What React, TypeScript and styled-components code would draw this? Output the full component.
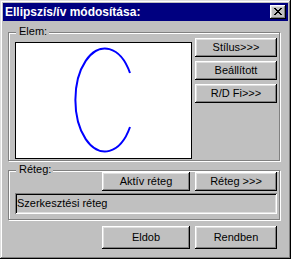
import React from "react";
import styled, { createGlobalStyle } from "styled-components";

const Global = createGlobalStyle`
  html, body { margin: 0; padding: 0; background: #c0c0c0; }
  body { font-family: "Liberation Sans", Arial, sans-serif; font-size: 11px; color: #000; }
  * { box-sizing: border-box; }
`;

const Window = styled.div`
  width: 291px;
  height: 259px;
  padding: 3px;
  background: #c0c0c0;
  box-shadow: inset -1px -1px 0 #000, inset 1px 1px 0 #dfdfdf,
    inset -2px -2px 0 #808080, inset 2px 2px 0 #fff;
  display: flex;
  flex-direction: column;
`;

const TitleBar = styled.div`
  height: 18px;
  flex: none;
  background: #000080;
  color: #fff;
  display: flex;
  align-items: center;
  justify-content: space-between;
  padding: 0 2px 0 2px;
`;

const TitleText = styled.span`
  font-weight: bold;
  font-size: 12px;
  line-height: 14px;
  white-space: nowrap;
`;

const CloseButton = styled.div`
  width: 16px;
  height: 14px;
  background: #c0c0c0;
  box-shadow: inset -1px -1px 0 #000, inset 1px 1px 0 #fff,
    inset -2px -2px 0 #808080, inset 2px 2px 0 #dfdfdf;
  display: flex;
  align-items: center;
  justify-content: center;
  padding: 0 1px 1px 0;
`;

const Client = styled.div`
  flex: 1;
  display: flex;
  flex-direction: column;
  padding: 11px 0 0 5px;
`;

const GroupBox = styled.div<{ $h: number; $mt?: number }>`
  position: relative;
  width: 272px;
  height: ${(p) => p.$h}px;
  margin-top: ${(p) => p.$mt ?? 0}px;
  border: 1px solid #808080;
  box-shadow: inset 1px 1px 0 #fff, 1px 1px 0 #fff;
`;

const GroupLabel = styled.span`
  position: absolute;
  top: -8px;
  left: 7px;
  padding: 0 2px 0 3px;
  background: #c0c0c0;
  line-height: 13px;
  white-space: nowrap;
`;

const ElemRow = styled.div`
  display: flex;
  align-items: flex-start;
  gap: 3px;
  padding: 5px 2px 1px 6px;
`;

const Preview = styled.div`
  width: 177px;
  height: 117px;
  margin-top: 4px;
  border: 1px solid #000;
  background: #fff;
  flex: none;
`;

const ButtonColumn = styled.div`
  display: flex;
  flex-direction: column;
  gap: 4px;
`;

const Button = styled.div<{ $w: number; $h: number }>`
  width: ${(p) => p.$w}px;
  height: ${(p) => p.$h}px;
  flex: none;
  display: flex;
  align-items: center;
  justify-content: center;
  padding-bottom: 1px;
  background: #c0c0c0;
  box-shadow: inset -1px -1px 0 #000, inset 1px 1px 0 #fff,
    inset -2px -2px 0 #808080, inset 2px 2px 0 #dfdfdf;
  white-space: nowrap;
  line-height: 13px;
`;

const LayerBody = styled.div`
  display: flex;
  flex-direction: column;
  padding: 1px 2px 5px 6px;
`;

const ButtonRow = styled.div<{ $mt?: number; $pr?: number }>`
  display: flex;
  justify-content: flex-end;
  gap: 5px;
  margin-top: ${(p) => p.$mt ?? 0}px;
  padding-right: ${(p) => p.$pr ?? 0}px;
`;

const Field = styled.div`
  height: 21px;
  margin-top: 2px;
  display: flex;
  align-items: center;
  padding: 0 0 1px 2px;
  background: #c0c0c0;
  box-shadow: inset 1px 1px 0 #808080, inset -1px -1px 0 #fff,
    inset 2px 2px 0 #000, inset -2px -2px 0 #dfdfdf;
  line-height: 13px;
  white-space: nowrap;
`;

const Footer = styled.div`
  width: 272px;
`;

const CloseGlyph = () => (
  <svg width="8" height="7" viewBox="0 0 8 7" shapeRendering="crispEdges">
    {[
      [0, 0], [1, 0], [6, 0], [7, 0],
      [1, 1], [2, 1], [5, 1], [6, 1],
      [2, 2], [3, 2], [4, 2], [5, 2],
      [3, 3], [4, 3],
      [2, 4], [3, 4], [4, 4], [5, 4],
      [1, 5], [2, 5], [5, 5], [6, 5],
      [0, 6], [1, 6], [6, 6], [7, 6],
    ].map(([x, y]) => (
      <rect key={`${x}-${y}`} x={x} y={y} width="1" height="1" fill="#000" />
    ))}
  </svg>
);

const ArcDrawing = () => (
  <svg width="175" height="115" viewBox="0 0 175 115">
    <path
      d="M114 30 A 29.5 51.5 0 1 0 114 84"
      fill="none"
      stroke="#0000ff"
      strokeWidth="2"
    />
  </svg>
);

export default function App() {
  return (
    <>
      <Global />
      <Window>
        <TitleBar>
          <TitleText>Ellipszís/ív módosítása:</TitleText>
          <CloseButton>
            <CloseGlyph />
          </CloseButton>
        </TitleBar>
        <Client>
          <GroupBox $h={129}>
            <GroupLabel>Elem:</GroupLabel>
            <ElemRow>
              <Preview>
                <ArcDrawing />
              </Preview>
              <ButtonColumn>
                <Button $w={82} $h={19}>Stílus&gt;&gt;&gt;</Button>
                <Button $w={82} $h={19}>Beállított</Button>
                <Button $w={82} $h={19}>R/D Fi&gt;&gt;&gt;</Button>
              </ButtonColumn>
            </ElemRow>
          </GroupBox>
          <GroupBox $h={50} $mt={9}>
            <GroupLabel>Réteg:</GroupLabel>
            <LayerBody>
              <ButtonRow>
                <Button $w={88} $h={19}>Aktív réteg</Button>
                <Button $w={82} $h={19}>Réteg &gt;&gt;&gt;</Button>
              </ButtonRow>
              <Field>Szerkesztési réteg</Field>
            </LayerBody>
          </GroupBox>
          <Footer>
            <ButtonRow $mt={6} $pr={3}>
              <Button $w={88} $h={23}>Eldob</Button>
              <Button $w={82} $h={23}>Rendben</Button>
            </ButtonRow>
          </Footer>
        </Client>
      </Window>
    </>
  );
}
